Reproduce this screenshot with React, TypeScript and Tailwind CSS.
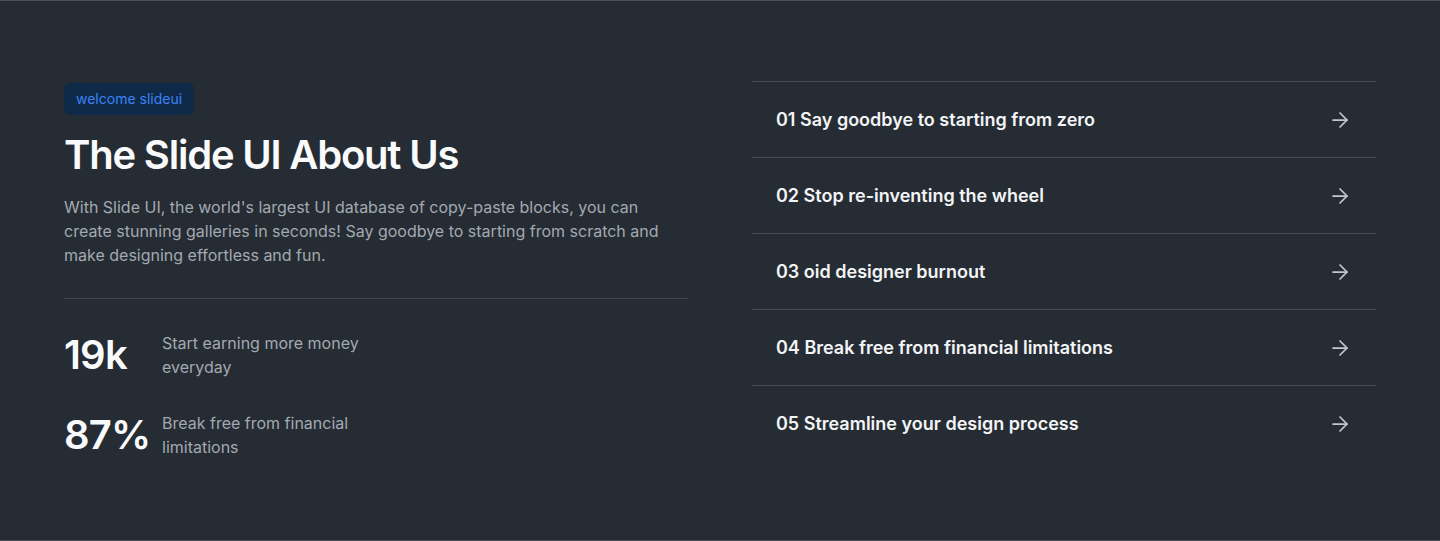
import { ArrowRight } from 'lucide-react';

const stats = [
  { value: '19k', label: 'Start earning more money everyday' },
  { value: '87%', label: 'Break free from financial limitations' },
];

const items = [
  '01 Say goodbye to starting from zero',
  '02 Stop re-inventing the wheel',
  '03 oid designer burnout',
  '04 Break free from financial limitations',
  '05 Streamline your design process',
];

export default function App() {
  return (
    <div className="min-h-[541px] bg-[#262c33] border-y border-[#4a5058] flex items-center font-['Inter',sans-serif]">
      <div className="w-full px-16 grid grid-cols-2 gap-16 items-center">
        <div>
          <span className="inline-block rounded-md bg-[#0f2a48] px-3 py-1.5 text-sm text-[#3b82f6]">welcome slideui</span>
          <h1 className="mt-4 text-[40px] leading-[48px] font-semibold tracking-[-0.03em] text-[#f9fafb]">The Slide UI About Us</h1>
          <p className="mt-4 text-base leading-6 text-[#a3a9b1]">
            With Slide UI, the world's largest UI database of copy-paste blocks, you can create stunning galleries in seconds! Say goodbye to starting from scratch and make designing effortless and fun.
          </p>
          <div className="mt-[31px] mb-8 h-px bg-[#40464e]" />
          <div className="space-y-8">
            {stats.map(s => (
              <div key={s.value} className="flex items-center">
                <div className="w-[98px] text-[40px] leading-10 font-semibold tracking-[-0.02em] text-[#f9fafb]">{s.value}</div>
                <p className="w-[210px] text-base leading-6 text-[#a3a9b1]">{s.label}</p>
              </div>
            ))}
          </div>
        </div>
        <div>
          {items.map(item => (
            <div key={item} className="flex items-center justify-between border-t border-[#474d55] pl-6 pr-6 pt-6 pb-[23px]">
              <span className="text-lg leading-7 font-semibold text-[#f3f4f6]">{item}</span>
              <ArrowRight size={24} strokeWidth={1.75} className="text-[#c4c8ce]" />
            </div>
          ))}
        </div>
      </div>
    </div>
  );
}
